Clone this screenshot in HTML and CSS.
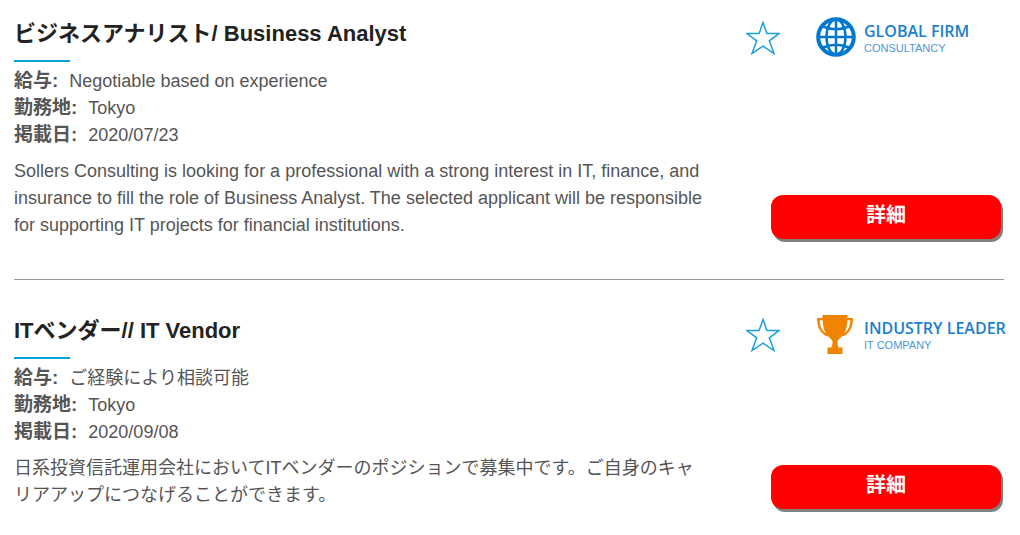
FILE: index.html
```html
<!DOCTYPE html>
<html lang="ja">
<head>
    <meta charset="UTF-8">
    <meta name="viewport" content="width=device-width, initial-scale=1.0">
    <title>求人一覧</title>
    <link rel="stylesheet" href="styles.css">
</head>
<body>
    <main class="jobs">
        <article class="job">
            <div class="job-info">
                <h2>ビジネスアナリスト/ Business Analyst</h2>
                <ul class="meta">
                    <li><strong>給与:</strong>Negotiable based on experience</li>
                    <li><strong>勤務地:</strong>Tokyo</li>
                    <li><strong>掲載日:</strong>2020/07/23</li>
                </ul>
                <p>Sollers Consulting is looking for a professional with a strong interest in IT, finance, and insurance to fill the role of Business Analyst. The selected applicant will be responsible for supporting IT projects for financial institutions.</p>
            </div>
            <div class="job-side">
                <div class="badges">
                    <button class="star" type="button" aria-label="お気に入り">
                        <svg viewBox="0 0 34 34" width="34" height="34">
                            <path d="M17 1.5 L20.9 12.5 H33 L23.3 19.8 L28 32.5 L17 25.2 L6 32.5 L10.7 19.8 L1 12.5 H13.1 Z"/>
                        </svg>
                    </button>
                    <div class="company">
                        <svg class="globe" viewBox="0 0 40 40" width="40" height="40">
                            <circle cx="20" cy="20" r="17.8" stroke-width="4"/>
                            <ellipse cx="20" cy="20" rx="9.5" ry="17.5"/>
                            <path d="M20 2 V38 M3 20 H37 M7 9.5 Q20 15 33 9.5 M7 30.5 Q20 25 33 30.5"/>
                        </svg>
                        <div class="company-text">
                            <b>GLOBAL FIRM</b>
                            <span>CONSULTANCY</span>
                        </div>
                    </div>
                </div>
                <a class="detail" href="#">詳細</a>
            </div>
        </article>

        <article class="job">
            <div class="job-info">
                <h2>ITベンダー// IT Vendor</h2>
                <ul class="meta">
                    <li><strong>給与:</strong>ご経験により相談可能</li>
                    <li><strong>勤務地:</strong>Tokyo</li>
                    <li><strong>掲載日:</strong>2020/09/08</li>
                </ul>
                <p>日系投資信託運用会社においてITベンダーのポジションで募集中です。ご自身のキャリアアップにつなげることができます。</p>
            </div>
            <div class="job-side">
                <div class="badges">
                    <button class="star" type="button" aria-label="お気に入り">
                        <svg viewBox="0 0 34 34" width="34" height="34">
                            <path d="M17 1.5 L20.9 12.5 H33 L23.3 19.8 L28 32.5 L17 25.2 L6 32.5 L10.7 19.8 L1 12.5 H13.1 Z"/>
                        </svg>
                    </button>
                    <div class="company">
                        <svg class="trophy" viewBox="0 0 40 40" width="40" height="40">
                            <path d="M6.500 1 H31.500 V4 H37 C37 13 33.500 21 25.500 22.500 C23.800 24.600 21.600 26 21.400 27.500 C21.300 29.500 21.800 31.500 22.600 33.500 H26.500 V40 H11.500 V33.500 H15.400 C16.200 31.500 16.700 29.500 16.600 27.500 C16.400 26 14.200 24.600 12.500 22.500 C4.500 21 1 13 1 4 H6.500 Z"/>
                            <path class="hole" d="M3.600 6.300 H6.600 C6.900 11.500 7.800 16 9.800 19.300 C6 17 4 12.500 3.600 6.300 Z M34.400 6.300 H31.400 C31.100 11.500 30.200 16 28.200 19.300 C32 17 34 12.500 34.400 6.300 Z"/>
                        </svg>
                        <div class="company-text">
                            <b>INDUSTRY LEADER</b>
                            <span>IT COMPANY</span>
                        </div>
                    </div>
                </div>
                <a class="detail" href="#">詳細</a>
            </div>
        </article>
    </main>
</body>
</html>
```

FILE: styles.css
```css
* {
    box-sizing: border-box;
}

body {
    margin: 0;
    background: #fff;
    color: #555;
    font-family: "Liberation Sans", "Noto Sans CJK JP", sans-serif;
    font-size: 18px;
    line-height: 27px;
}

.jobs {
    padding: 17px 16px 0 14px;
}

.job {
    display: flex;
    justify-content: space-between;
    padding-bottom: 40px;
}

.job + .job {
    border-top: 1px solid #999;
    padding-top: 34px;
    padding-bottom: 24px;
}

.job-info {
    width: 70%;
}

h2 {
    margin: 0;
    color: #222;
    font-size: 22px;
    line-height: 34px;
}

h2::after {
    content: "";
    display: block;
    width: 56px;
    height: 2px;
    margin: 9px 0 5px;
    background: #00a4d8;
}

.meta {
    margin: 0 0 10px;
    padding: 0;
    list-style: none;
}

.meta li {
    height: 27px;
}

.meta strong {
    margin-right: 11px;
    font-size: 19px;
}

p {
    margin: 0;
}

.job-side {
    display: flex;
    flex: none;
    flex-direction: column;
    justify-content: space-between;
    width: 258px;
}

.badges {
    display: flex;
    gap: 36px;
}

.star {
    padding: 2px 0 0;
    border: 0;
    background: none;
    cursor: pointer;
}

.star svg {
    display: block;
    fill: none;
    stroke: #1c9fd8;
    stroke-width: 1.5;
}

.company {
    display: flex;
    gap: 8px;
    color: #1a80cc;
    white-space: nowrap;
}

.company svg {
    flex: none;
}

.globe {
    fill: none;
    stroke: #0079cc;
    stroke-width: 2.5;
}

.trophy {
    fill: #f08300;
}

.trophy .hole {
    fill: #fff;
}

.company-text {
    display: flex;
    flex-direction: column;
    padding-top: 4px;
}

.company-text b {
    font-family: "Open Sans", sans-serif;
    font-size: 16px;
    font-weight: 600;
    line-height: 20px;
}

.company-text span {
    color: #4a98d6;
    font-size: 11px;
    line-height: 14px;
}

.detail {
    margin: 0 3px 0 25px;
    padding-bottom: 4px;
    border-radius: 12px;
    background: #f00;
    box-shadow: 2px 3px 0 #808080;
    color: #fff;
    font-size: 20px;
    font-weight: bold;
    line-height: 40px;
    text-align: center;
    text-decoration: none;
}
```
